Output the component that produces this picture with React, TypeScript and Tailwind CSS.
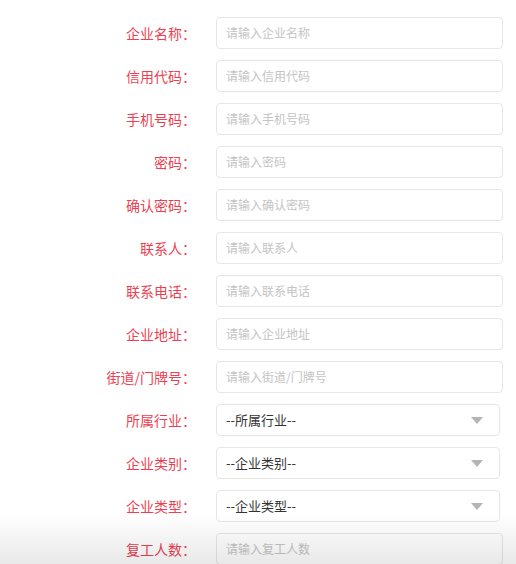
import React from "react";

const inputs1 = [
  ["企业名称", "请输入企业名称"],
  ["信用代码", "请输入信用代码"],
  ["手机号码", "请输入手机号码"],
  ["密码", "请输入密码"],
  ["确认密码", "请输入确认密码"],
  ["联系人", "请输入联系人"],
  ["联系电话", "请输入联系电话"],
  ["企业地址", "请输入企业地址"],
  ["街道/门牌号", "请输入街道/门牌号"],
];

const selects = [
  ["所属行业", "--所属行业--"],
  ["企业类别", "--企业类别--"],
  ["企业类型", "--企业类型--"],
];

function Label({ text }: { text: string }) {
  return (
    <div className="w-[196px] shrink-0 text-right text-[14px] text-[#ec3f52] leading-none">
      {text}：
    </div>
  );
}

export default function App() {
  return (
    <div
      className="relative h-[564px] w-[516px] overflow-hidden bg-white"
      style={{ fontFamily: '"Noto Sans CJK SC", "Noto Sans", sans-serif' }}
    >
      <div className="flex flex-col gap-[11px] pt-[17px]">
        {inputs1.map(([l, p]) => (
          <div key={l} className="flex items-center">
            <Label text={l} />
            <div className="ml-[20px] flex h-[32px] w-[287px] items-center rounded-[4px] border border-[#e6e6e6] px-[9px] text-[12px] text-[#c4c4c4]">
              {p}
            </div>
          </div>
        ))}
        {selects.map(([l, p]) => (
          <div key={l} className="flex items-center">
            <Label text={l} />
            <div className="ml-[20px] flex h-[32px] w-[284px] items-center justify-between rounded-[4px] border border-[#e6e6e6] pl-[9px] pr-[16px] text-[13px] text-[#333]">
              <span>{p}</span>
              <svg width="12" height="7" viewBox="0 0 12 7">
                <polygon points="0,0 12,0 6,7" fill="#b5b5b5" />
              </svg>
            </div>
          </div>
        ))}
        <div className="flex items-center">
          <Label text="复工人数" />
          <div className="ml-[20px] flex h-[32px] w-[287px] items-center rounded-[4px] border border-[#e6e6e6] px-[9px] text-[12px] text-[#c4c4c4]">
            请输入复工人数
          </div>
        </div>
      </div>
      <div className="pointer-events-none absolute bottom-0 left-0 h-[50px] w-full bg-gradient-to-b from-[rgba(0,0,0,0)] to-[rgba(0,0,0,0.09)]" />
    </div>
  );
}
